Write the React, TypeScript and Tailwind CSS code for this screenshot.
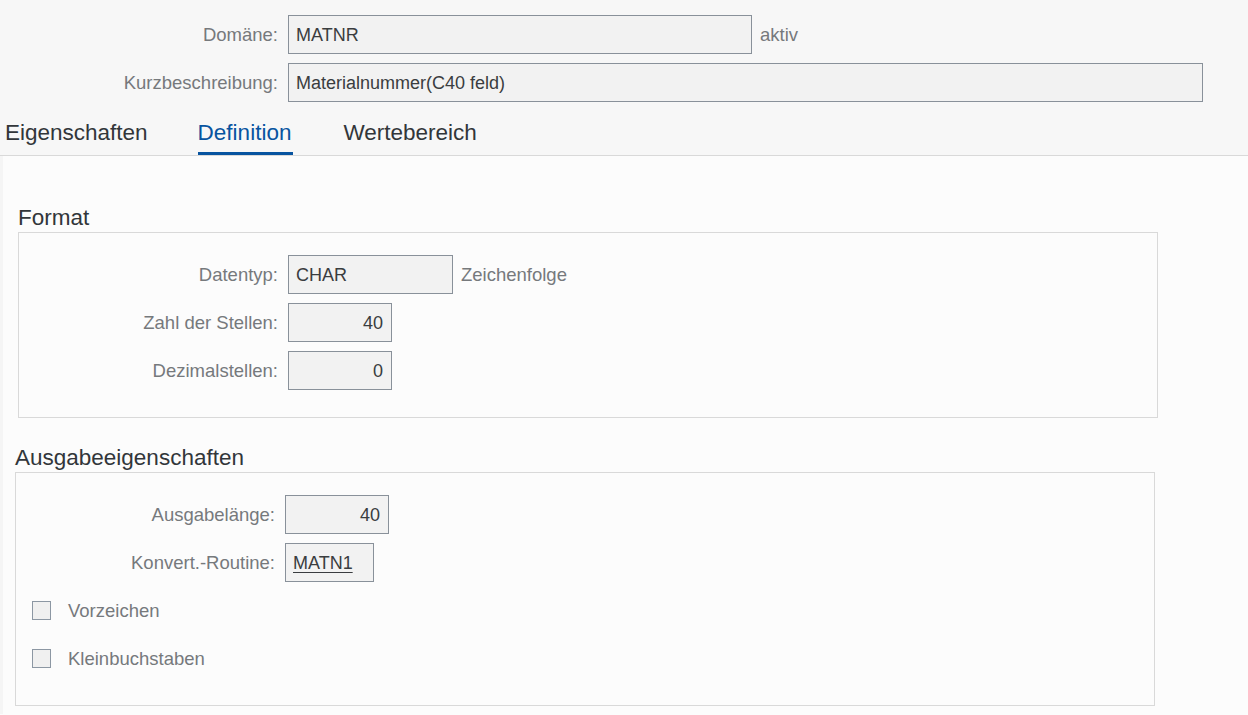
import type { ReactNode } from "react";

const labelCls =
  "w-[259px] shrink-0 text-right text-[18.5px] leading-[22px] text-[#76797c]";
const fieldCls =
  "flex h-[39px] shrink-0 items-center border border-[#89919a] bg-[#f2f2f2] px-[7px] text-[18px] leading-[22px] text-[#3a3d40]";

function Field({
  label,
  width,
  value,
  align = "left",
  after,
  link,
}: {
  label: string;
  width: string;
  value: string;
  align?: "left" | "right";
  after?: string;
  link?: boolean;
}) {
  return (
    <div className="flex items-center">
      <span className={labelCls}>{label}</span>
      <div
        className={`${fieldCls} ${width} ml-[10px] ${
          align === "right" ? "justify-end pr-[8px]" : ""
        }`}
      >
        <span className={link ? "underline underline-offset-[3px]" : ""}>
          {value}
        </span>
      </div>
      {after && (
        <span className="ml-[8px] text-[18.5px] leading-[22px] text-[#76797c]">
          {after}
        </span>
      )}
    </div>
  );
}

function Check({ label }: { label: string }) {
  return (
    <div className="flex h-[39px] items-center pl-[16px]">
      <span className="h-[19px] w-[19px] shrink-0 border border-[#8c97a3] bg-[#f0f0f0]" />
      <span className="ml-[17px] text-[18.5px] leading-[22px] text-[#76797c]">
        {label}
      </span>
    </div>
  );
}

function Group({
  title,
  className,
  children,
}: {
  title: string;
  className: string;
  children: ReactNode;
}) {
  return (
    <section className={className}>
      <h2 className="mb-[1px] text-[22.5px] leading-[26px] text-[#32363a]">
        {title}
      </h2>
      <div className="flex w-[1140px] flex-col gap-[9px] border border-[#d9d9d9] pb-[27px] pt-[22px]">
        {children}
      </div>
    </section>
  );
}

export default function App() {
  const tabs = ["Eigenschaften", "Definition", "Wertebereich"];
  const active = "Definition";

  return (
    <div
      className="min-h-[715px] w-full bg-[#fcfcfc]"
      style={{ fontFamily: '"Liberation Sans", Arial, sans-serif' }}
    >
      {/* header: domain + short text + tabs */}
      <header className="bg-[#f7f7f7] pt-[15px]">
        <div className="flex flex-col gap-[9px] pl-[19px]">
          <div className="flex items-center">
            <span className={labelCls}>Domäne:</span>
            <div className={`${fieldCls} ml-[10px] w-[464px]`}>MATNR</div>
            <span className="ml-[8px] text-[18.5px] leading-[22px] text-[#76797c]">
              aktiv
            </span>
          </div>
          <div className="flex items-center">
            <span className={labelCls}>Kurzbeschreibung:</span>
            <div className={`${fieldCls} ml-[10px] w-[915px]`}>
              Materialnummer(C40 feld)
            </div>
          </div>
        </div>

        <nav className="mt-[18px] flex gap-[50px] border-b border-[#d9d9d9] pl-[5px]">
          {tabs.map((t) => (
            <div
              key={t}
              className={`pb-[6px] text-[22.5px] leading-[26px] ${
                t === active
                  ? "border-b-[3px] border-[#0854a0] pr-[2px] text-[#0854a0]"
                  : "border-b-[3px] border-transparent text-[#32363a]"
              }`}
            >
              {t}
            </div>
          ))}
        </nav>
      </header>

      {/* definition tab */}
      <main className="border-l-[3px] border-[#f5f5f5] pb-[8px]">
        <Group title="Format" className="pl-[15px] pt-[49px]">
          <Field
            label="Datentyp:"
            width="w-[165px]"
            value="CHAR"
            after="Zeichenfolge"
          />
          <Field
            label="Zahl der Stellen:"
            width="w-[104px]"
            value="40"
            align="right"
          />
          <Field
            label="Dezimalstellen:"
            width="w-[104px]"
            value="0"
            align="right"
          />
        </Group>

        <Group title="Ausgabeeigenschaften" className="pl-[12px] pt-[27px]">
          <Field
            label="Ausgabelänge:"
            width="w-[104px]"
            value="40"
            align="right"
          />
          <Field
            label="Konvert.-Routine:"
            width="w-[89px]"
            value="MATN1"
            link
          />
          <Check label="Vorzeichen" />
          <Check label="Kleinbuchstaben" />
        </Group>
      </main>
    </div>
  );
}
